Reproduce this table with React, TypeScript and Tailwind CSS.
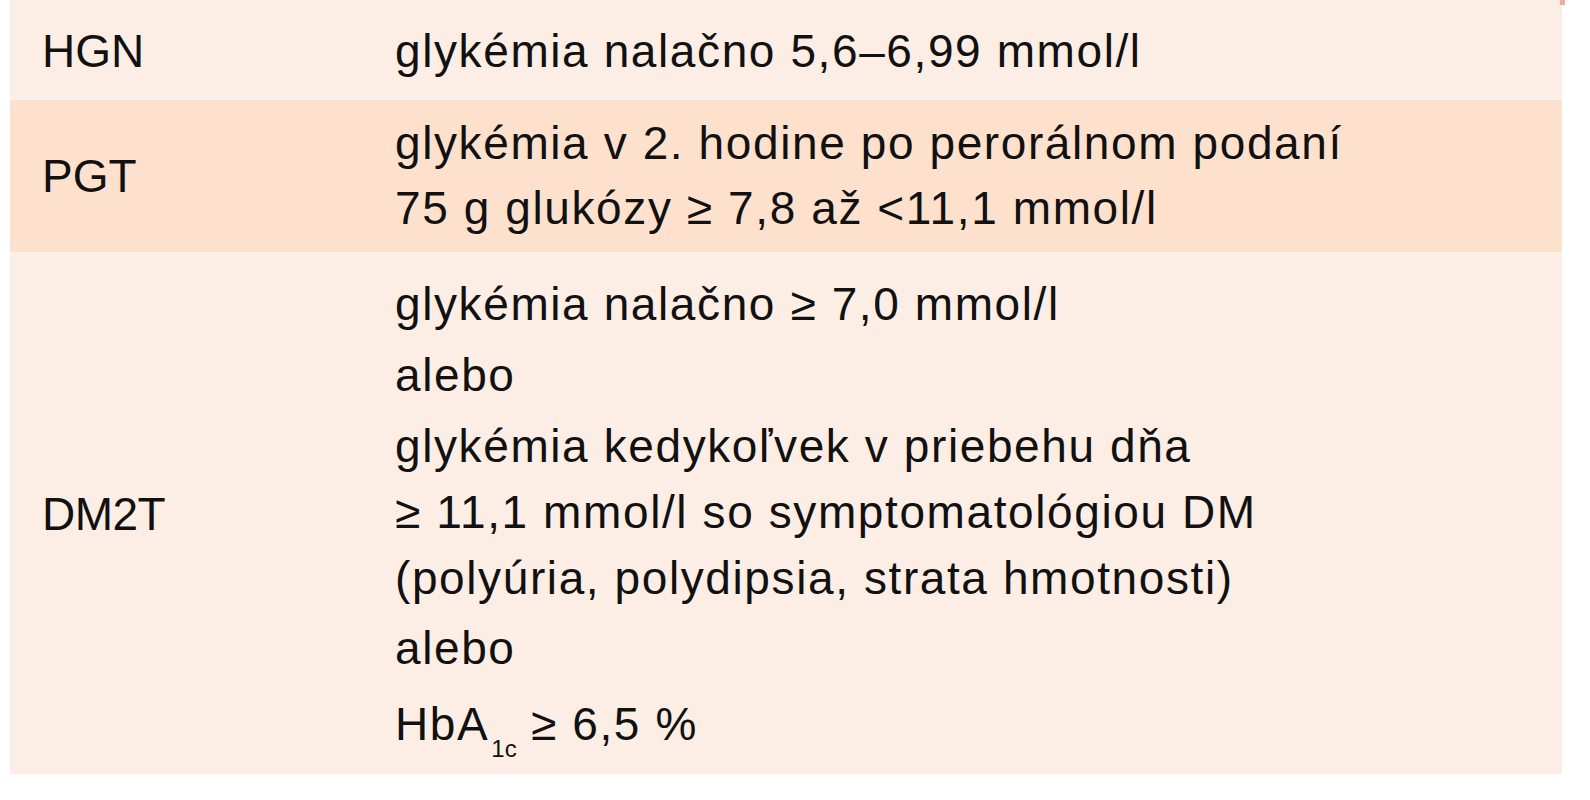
export default function App() {
  return (
    <div className="relative min-h-[800px] w-[1590px] bg-white pl-[10px] text-[#111111] [font-family:'Liberation_Sans',Arial,sans-serif]">
      <span className="absolute right-[25px] top-0 h-[5px] w-[5px] bg-[#f2aaa0]" />
      <div className="w-[1552px] text-[46px] leading-[65px] tracking-[1.6px]">
        {/* HGN */}
        <div className="flex bg-[#fdeee5] pb-[14px] pt-[19px]">
          <div className="w-[385px] shrink-0 pl-8 tracking-normal">HGN</div>
          <div>glykémia nalačno 5,6–6,99 mmol/l</div>
        </div>

        {/* PGT */}
        <div className="flex items-center border-y-2 border-[#fef3ec] bg-[#fde1cd] pb-[11px] pt-[11px]">
          <div className="w-[385px] shrink-0 pl-8 tracking-normal">PGT</div>
          <div>
            glykémia v 2. hodine po perorálnom podaní
            <br />
            75 g glukózy ≥ 7,8 až &lt;11,1 mmol/l
          </div>
        </div>

        {/* DM2T */}
        <div className="flex items-center bg-[#fdeee5] pb-[17px] pt-[17px] leading-[66px]">
          <div className="w-[385px] shrink-0 pl-8 tracking-[-0.5px]">DM2T</div>
          <div className="flex flex-col">
            <p>glykémia nalačno ≥ 7,0 mmol/l</p>
            <p className="mt-[5px]">alebo</p>
            <p className="mt-[5px]">
              glykémia kedykoľvek v priebehu dňa
              <br />
              ≥ 11,1 mmol/l so symptomatológiou DM
              <br />
              (polyúria, polydipsia, strata hmotnosti)
            </p>
            <p className="mt-[4px]">alebo</p>
            <p className="mt-[10px]">
              HbA<sub className="bottom-[-17px] ml-[2px] text-[24px] tracking-normal">1c</sub> ≥ 6,5 %
            </p>
          </div>
        </div>
      </div>
    </div>
  );
}
